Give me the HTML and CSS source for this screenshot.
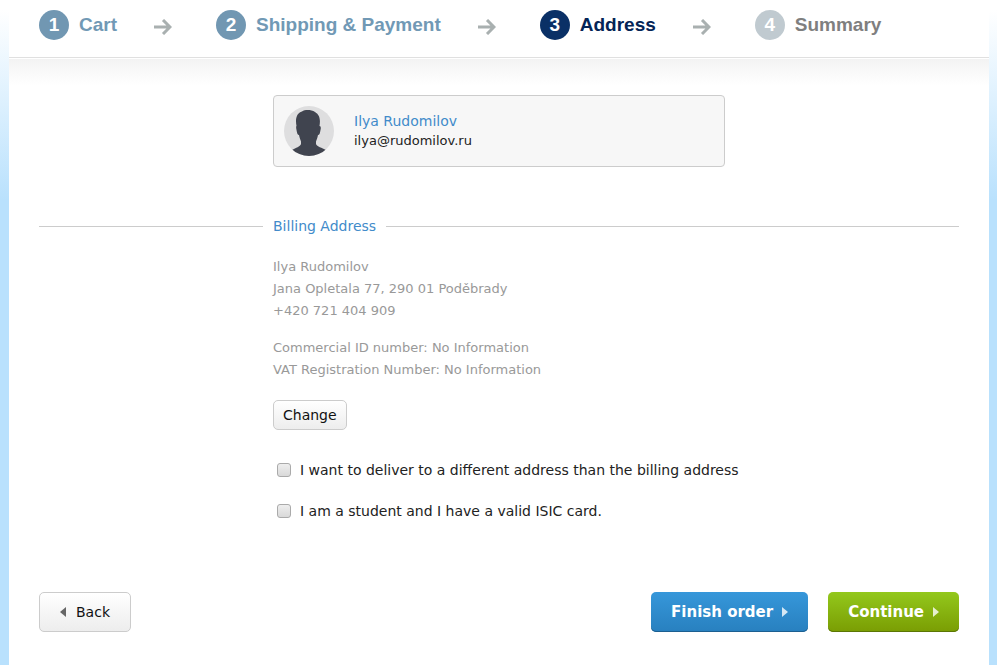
FILE: index.html
```
<!DOCTYPE html>
<html lang="en">
<head>
  <meta charset="UTF-8" />
  <meta name="viewport" content="width=device-width, initial-scale=1" />
  <title>Address</title>
  <link rel="stylesheet" href="styles.css">
</head>
<body>
  <div class="page">
    <ol class="steps">
      <li class="step done"><span class="num">1</span>Cart
        <svg class="arrow" width="18" height="16" viewBox="0 0 18 16"><path d="M0 8h16M9 1l7 7-7 7" /></svg>
      </li>
      <li class="step done"><span class="num">2</span>Shipping &amp; Payment
        <svg class="arrow" width="18" height="16" viewBox="0 0 18 16"><path d="M0 8h16M9 1l7 7-7 7" /></svg>
      </li>
      <li class="step current"><span class="num">3</span>Address
        <svg class="arrow" width="18" height="16" viewBox="0 0 18 16"><path d="M0 8h16M9 1l7 7-7 7" /></svg>
      </li>
      <li class="step"><span class="num">4</span>Summary</li>
    </ol>

    <form class="content">
      <div class="user">
        <svg class="avatar" width="50" height="50" viewBox="0 0 50 50">
          <clipPath id="round"><circle cx="25" cy="25" r="25" /></clipPath>
          <g clip-path="url(#round)">
            <rect width="50" height="50" fill="#dededf" />
            <path fill="#40444f" d="M12.500 20C11 12 13 7 18 5.500 21 3.500 27 3.500 31 6c5 3 5.500 8 4.500 14 1.500 0 1.500 2 1 4-.5 3-1 5-2.500 5-.5 3-1.500 5-2 6.500V38c1 3 6 3.500 10 6v7H8v-7c4-2.500 8-3 9-6v-2.500c-.5-1.500-1.500-3.500-2-6.500-1.500 0-2-2-2.500-5-.5-2-.5-4 0-4z" />
          </g>
        </svg>
        <div class="user-info">
          <a class="user-name" href="#">Ilya Rudomilov</a>
          <span class="user-mail">ilya@rudomilov.ru</span>
        </div>
      </div>

      <h2 class="legend">Billing Address</h2>

      <div class="billing">
        <p>Ilya Rudomilov<br>Jana Opletala 77, 290 01 Poděbrady<br>+420 721 404 909</p>
        <p>Commercial ID number: No Information<br>VAT Registration Number: No Information</p>
        <button type="button" class="btn btn-small">Change</button>

        <label class="check" for="deliver"><input type="checkbox" id="deliver" />I want to deliver to a different address than the billing address</label>
        <label class="check" for="student"><input type="checkbox" id="student" />I am a student and I have a valid ISIC card.</label>
      </div>

      <div class="actions">
        <button type="button" class="btn back"><svg width="6" height="10" viewBox="0 0 6 10"><path d="M6 0v10L0 5z" /></svg>Back</button>
        <button type="button" class="btn primary finish">Finish order<svg width="6" height="10" viewBox="0 0 6 10"><path d="M0 0v10l6-5z" /></svg></button>
        <button type="submit" class="btn primary continue">Continue<svg width="6" height="10" viewBox="0 0 6 10"><path d="M0 0v10l6-5z" /></svg></button>
      </div>
    </form>
  </div>
</body>
</html>
```

FILE: styles.css
```
* {
  box-sizing: border-box;
}

body {
  margin: 0;
  padding: 0 8px 0 9px;
  min-height: 100vh;
  display: flex;
  font-family: Verdana, 'DejaVu Sans', sans-serif;
  font-size: 14px;
  color: #222;
  background: #b9e1fd linear-gradient(#fff 10px, #b9e1fd 200px) no-repeat;
  background-size: 100% 200px;
}

.page {
  flex: 1;
  background: #fff;
}

/* order steps */
.steps {
  display: flex;
  margin: 0;
  padding: 10px 30px 17px;
  list-style: none;
  border-bottom: 1px solid #e0e0e0;
}

.step {
  display: flex;
  align-items: center;
  height: 30px;
  font: bold 19px/30px Arial, 'Liberation Sans', sans-serif;
  color: #7f7f7f;
  white-space: nowrap;
}

.num {
  width: 30px;
  height: 30px;
  margin-right: 10px;
  border-radius: 50%;
  background: #c0cad0;
  color: #fff;
  text-align: center;
}

.done {
  color: #7199b5;
}

.done .num {
  background: #7197b2;
}

.current {
  color: #042456;
}

.current .num {
  background: #0a3066;
}

.arrow {
  margin: 4px 44px 0 37px;
  fill: none;
  stroke: #a9b0b0;
  stroke-width: 3;
}

/* content */
.content {
  padding: 37px 30px 33px;
  background: linear-gradient(#f3f3f3, #fff) 0 1px / 100% 26px no-repeat;
}

.user {
  display: flex;
  align-items: center;
  max-width: 452px;
  height: 72px;
  margin-left: 234px;
  padding: 0 10px;
  border: 1px solid #ccc;
  border-radius: 4px;
  background: #f7f7f7;
}

.user-info {
  display: flex;
  flex-direction: column;
  margin-left: 20px;
  line-height: 20px;
}

.user-name {
  color: #428bca;
  text-decoration: none;
}

.user-mail {
  font-size: 13px;
}

.legend {
  display: flex;
  align-items: center;
  gap: 10px;
  margin: 49px 0 20px;
  font-size: 14px;
  font-weight: normal;
  line-height: 20px;
  color: #428bca;
}

.legend::before,
.legend::after {
  content: '';
  height: 1px;
  background: #ccc;
}

.legend::before {
  width: 224px;
}

.legend::after {
  flex: 1;
}

.billing {
  margin-left: 234px;
}

.billing p {
  margin: 0 0 15px;
  font-size: 13px;
  line-height: 22px;
  color: #999;
}

.billing .btn-small {
  margin: 19px 0 30px;
}

.check {
  display: flex;
  align-items: center;
  height: 20px;
  margin-bottom: 21px;
}

.check input {
  appearance: none;
  width: 14px;
  height: 14px;
  margin: 0 9px 0 4px;
  border: 1px solid #aaa;
  border-radius: 3px;
  background: linear-gradient(#eee, #d9d9d9);
}

.check input:checked {
  background: #428bca;
}

/* buttons */
.btn {
  display: flex;
  align-items: center;
  justify-content: center;
  height: 40px;
  padding: 0 20px;
  border: 1px solid #ccc;
  border-radius: 5px;
  background: linear-gradient(#fff, #ededed);
  color: #111;
  font: inherit;
  cursor: pointer;
}

.btn svg {
  fill: #666;
}

.btn-small {
  height: 30px;
  padding: 0 9px;
}

.actions {
  display: flex;
  gap: 20px;
  margin-top: 71px;
}

.back {
  margin-right: auto;
}

.back svg {
  margin-right: 10px;
}

.primary {
  border: 0;
  color: #fff;
  font-size: 15px;
  font-weight: bold;
}

.primary svg {
  margin-left: 9px;
  fill: #fff;
  opacity: 0.8;
}

.finish {
  background: linear-gradient(#3697da, #2880bf);
  box-shadow: inset 0 -1px #1c5f90;
}

.continue {
  background: linear-gradient(#93c81c, #7a9d03);
  box-shadow: inset 0 -1px #5b7604;
}
```
